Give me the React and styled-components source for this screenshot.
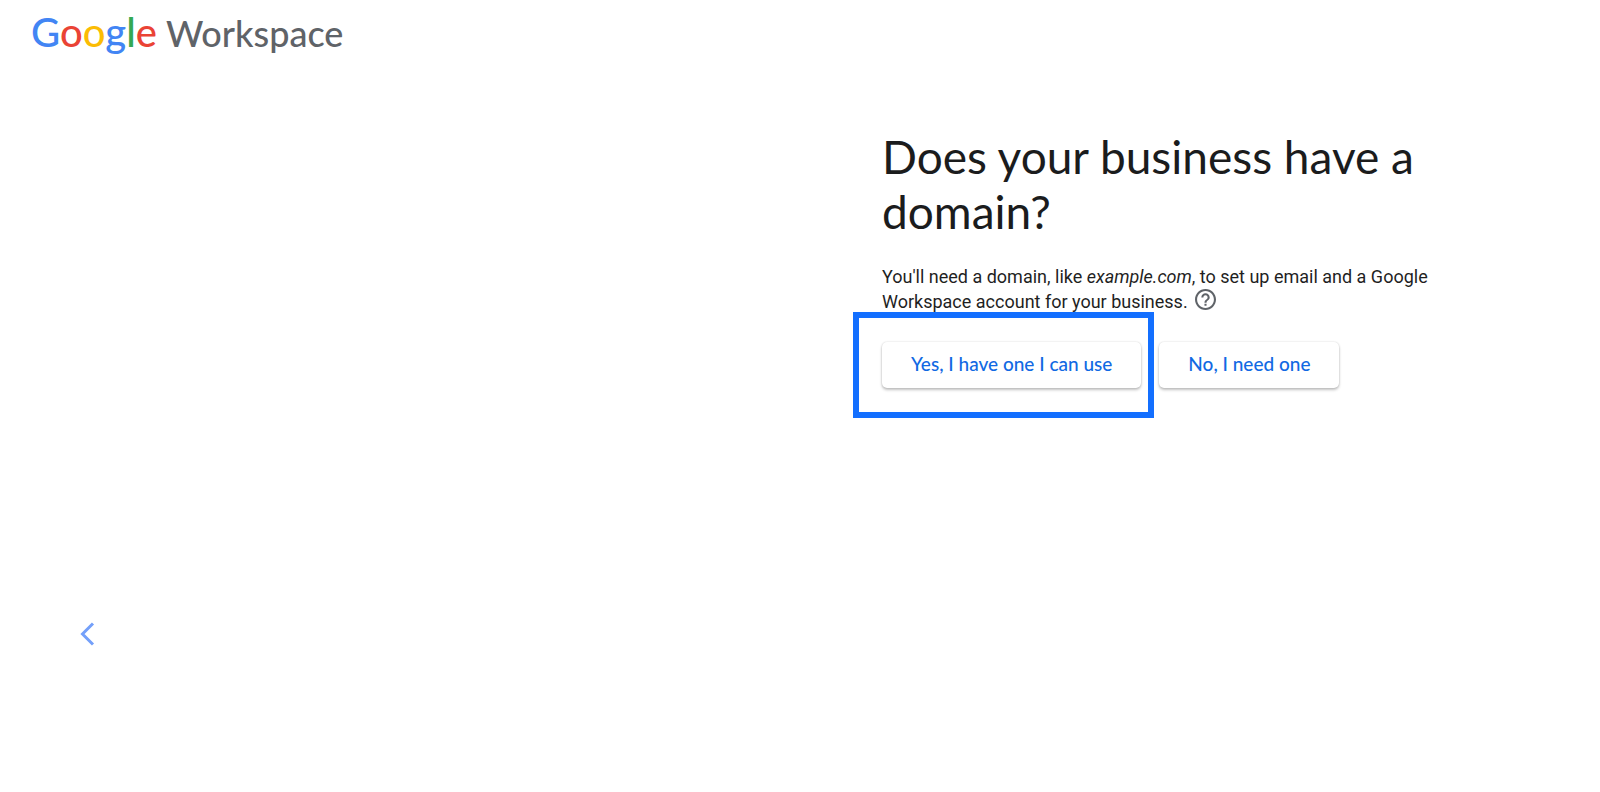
import React from "react";
import styled, { createGlobalStyle } from "styled-components";

const GlobalStyle = createGlobalStyle`
  * { box-sizing: border-box; }
  body { margin: 0; background: #fff; color: #1f1f1f; font-family: Roboto, "Liberation Sans", sans-serif; }
`;

const Page = styled.div`
  min-height: 100vh;
  display: flex;
  flex-direction: column;
`;

const Header = styled.header`
  padding: 7px 31px;
`;

const Logo = styled.a`
  display: inline-flex;
  align-items: baseline;
  gap: 9px;
  font-family: Lato, sans-serif;
  font-size: 36px;
  font-weight: 500;
  line-height: 50px;
  color: #5f6368;
  text-decoration: none;
`;

const Wordmark = styled.span`
  font-size: 40px;
`;

const Letter = styled.span`
  color: ${({ $color }) => $color};
`;

const Main = styled.main`
  flex: 1;
  display: grid;
  grid-template-columns: 1fr 1fr;
`;

const BackPane = styled.nav`
  display: flex;
  align-items: flex-end;
  padding: 0 76px 142px;
`;

const BackButton = styled.button`
  display: flex;
  padding: 4px;
  border: 0;
  background: none;
  color: #74a0fa;
  cursor: pointer;
`;

const Content = styled.section`
  padding: 64px 82px 0;
`;

const Title = styled.h1`
  max-width: 576px;
  margin: 0;
  font-family: Lato, sans-serif;
  font-size: 46px;
  font-weight: 400;
  line-height: 55px;
  color: #1b1c1d;
`;

const Description = styled.p`
  max-width: 576px;
  margin: 25px 0 0;
  font-size: 18px;
  line-height: 25px;
`;

const HelpButton = styled.button`
  padding: 0;
  margin-left: 3px;
  border: 0;
  background: none;
  color: #5f6368;
  vertical-align: top;
  height: 22px;
  cursor: pointer;
`;

const Actions = styled.div`
  display: flex;
  gap: 18px;
  margin-top: 28px;
`;

const Highlight = styled.div`
  position: relative;

  &::after {
    content: "";
    position: absolute;
    inset: -30px -13px -30px -29px;
    border: 6px solid #136fff;
    pointer-events: none;
  }
`;

const ChoiceButton = styled.button`
  height: 46px;
  padding: 0 29px 3px;
  border: 0;
  border-radius: 5px;
  background: #fff;
  box-shadow: 0 2px 3px rgba(0, 0, 0, 0.24), 0 0 2px rgba(0, 0, 0, 0.16);
  color: #1169e3;
  font-family: Lato, sans-serif;
  font-size: 19px;
  font-weight: 500;
  white-space: nowrap;
  cursor: pointer;
`;

const letters = [
  ["G", "#4285f4"],
  ["o", "#ea4335"],
  ["o", "#fbbc04"],
  ["g", "#4285f4"],
  ["l", "#34a853"],
  ["e", "#ea4335"],
];

export default function App() {
  return (
    <Page>
      <GlobalStyle />
      <Header>
        <Logo href="#" aria-label="Google Workspace">
          <Wordmark>
            {letters.map(([char, color], i) => (
              <Letter key={i} $color={color}>{char}</Letter>
            ))}
          </Wordmark>
          <span>Workspace</span>
        </Logo>
      </Header>
      <Main>
        <BackPane>
          <BackButton type="button" aria-label="Back">
            <svg width="16" height="24" viewBox="0 0 16 24" fill="none" stroke="currentColor" strokeWidth="3">
              <path d="M13 1.5 2.5 12 13 22.5" />
            </svg>
          </BackButton>
        </BackPane>
        <Content>
          <Title>Does your business have a domain?</Title>
          <Description>
            You'll need a domain, like <em>example.com</em>, to set up email and a Google Workspace account for your business.{" "}
            <HelpButton type="button" aria-label="Help">
              <svg width="21" height="21" viewBox="2 2 20 20" fill="currentColor">
                <path d="M11 18h2v-2h-2v2zm1-16C6.480 2 2 6.480 2 12s4.480 10 10 10 10-4.480 10-10S17.520 2 12 2zm0 18c-4.410 0-8-3.590-8-8s3.590-8 8-8 8 3.590 8 8-3.590 8-8 8zm0-14c-2.210 0-4 1.790-4 4h2c0-1.100.9-2 2-2s2 .9 2 2c0 2-3 1.750-3 5h2c0-2.250 3-2.500 3-5 0-2.210-1.790-4-4-4z" />
              </svg>
            </HelpButton>
          </Description>
          <Actions>
            <Highlight>
              <ChoiceButton type="button">Yes, I have one I can use</ChoiceButton>
            </Highlight>
            <ChoiceButton type="button">No, I need one</ChoiceButton>
          </Actions>
        </Content>
      </Main>
    </Page>
  );
}
